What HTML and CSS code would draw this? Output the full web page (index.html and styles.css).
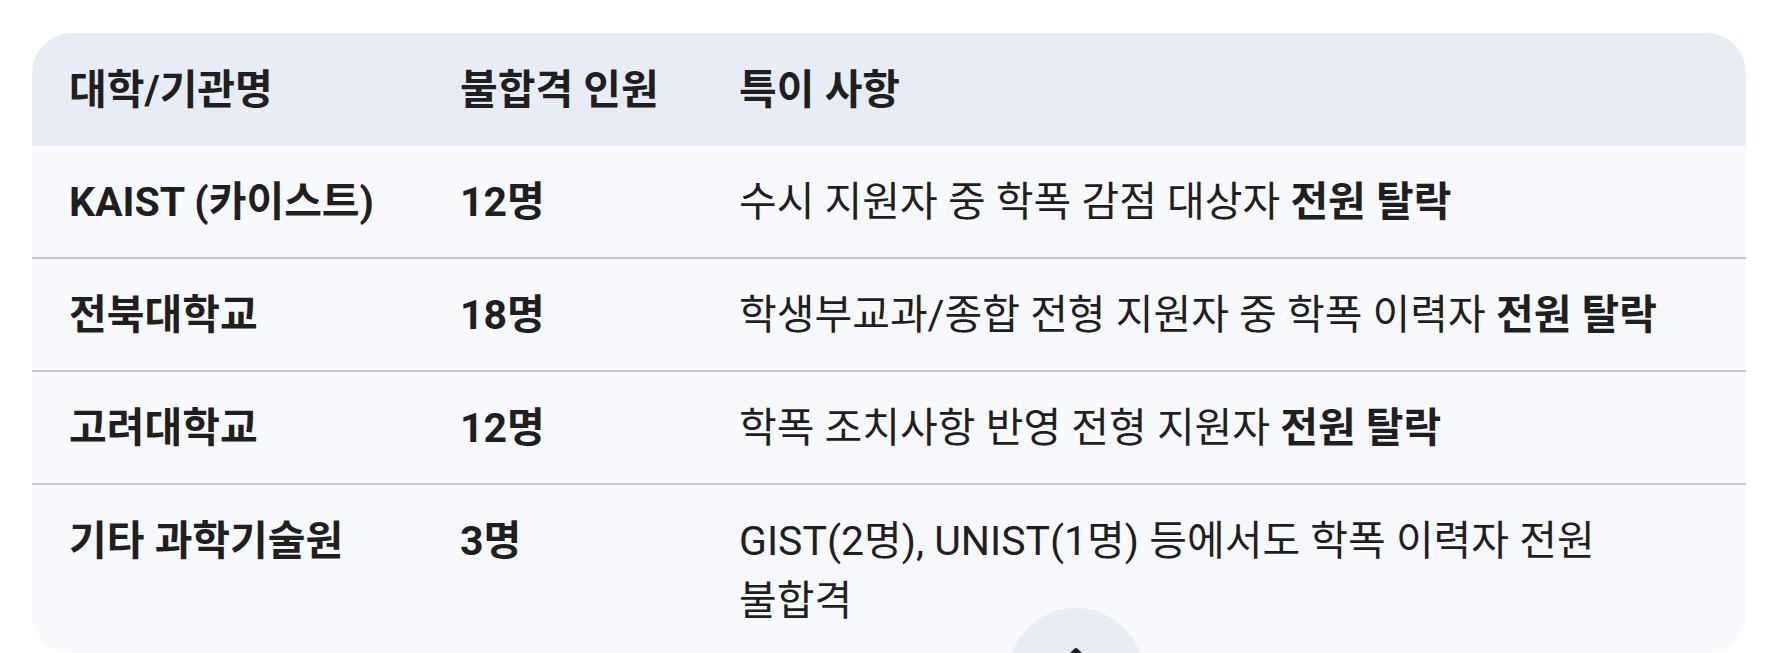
FILE: index.html
```html
<!DOCTYPE html>
<html lang="ko">
<head>
<meta charset="utf-8">
<title>학폭 불합격 현황</title>
<link rel="stylesheet" href="styles.css">
</head>
<body>
<div class="card">
  <table class="data">
    <colgroup>
      <col class="c1">
      <col class="c2">
      <col class="c3">
    </colgroup>
    <thead>
      <tr>
        <th>대학/기관명</th>
        <th>불합격 인원</th>
        <th>특이 사항</th>
      </tr>
    </thead>
    <tbody>
      <tr>
        <td class="strong">KAIST (카이스트)</td>
        <td class="strong">12명</td>
        <td>수시 지원자 중 학폭 감점 대상자 <b>전원 탈락</b></td>
      </tr>
      <tr>
        <td class="strong">전북대학교</td>
        <td class="strong">18명</td>
        <td>학생부교과/종합 전형 지원자 중 학폭 이력자 <b>전원 탈락</b></td>
      </tr>
      <tr>
        <td class="strong">고려대학교</td>
        <td class="strong">12명</td>
        <td>학폭 조치사항 반영 전형 지원자 <b>전원 탈락</b></td>
      </tr>
      <tr>
        <td class="strong">기타 과학기술원</td>
        <td class="strong">3명</td>
        <td>GIST(2명), UNIST(1명) 등에서도 학폭 이력자 전원 불합격</td>
      </tr>
    </tbody>
  </table>
</div>
<button class="fab" type="button" aria-label="위로">
  <svg viewBox="0 0 56 56" width="56" height="56" aria-hidden="true">
    <path d="M28 3 V54 M10 21 L28 3 L46 21" fill="none" stroke="#1f1f1f" stroke-width="4" stroke-linecap="round" stroke-linejoin="round"/>
  </svg>
</button>
</body>
</html>
```
FILE: styles.css
```css
html, body {
  margin: 0;
  padding: 0;
  background: #ffffff;
  height: 100%;
  overflow: hidden;
}

body {
  padding: 33px 31px 0 32px;
  box-sizing: border-box;
  font-family: Roboto, "Noto Sans CJK KR", sans-serif;
  color: #1f1f1f;
}

.card {
  height: 620px;
  border-radius: 40px;
  overflow: hidden;
  background: #f8f9fd;
}

.data {
  width: 100%;
  border-collapse: collapse;
  table-layout: fixed;
  font-size: 41px;
  line-height: 60px;
  word-break: keep-all;
}

.c1 { width: 391px; }
.c2 { width: 279px; }

.data th {
  background: #e8ecf5;
  font-weight: 700;
  text-align: left;
  padding: 26.5px 20px 26.5px 37px;
}

.data td {
  padding: 25.5px 36px 25.5px 37px;
  text-align: left;
  vertical-align: top;
  font-weight: 400;
}

.data td.strong,
.data b {
  font-weight: 700;
}

.data tbody tr + tr td {
  border-top: 2px solid #c4c6c8;
}

.fab {
  position: absolute;
  left: 1008px;
  top: 608px;
  width: 136px;
  height: 136px;
  border: none;
  border-radius: 50%;
  background: #e8ecf5;
  padding: 0;
  display: flex;
  align-items: flex-start;
  justify-content: center;
}

.fab svg {
  margin-top: 39px;
}
```
